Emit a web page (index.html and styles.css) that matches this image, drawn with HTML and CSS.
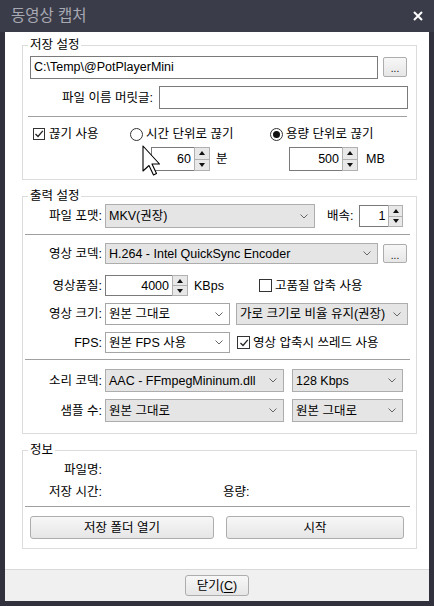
FILE: index.html
```html
<!DOCTYPE html>
<html lang="ko">
<head>
  <meta charset="UTF-8" />
  <title>동영상 캡처</title>
  <link rel="stylesheet" href="styles.css">
</head>
<body>
  <div class="window">
    <div class="titlebar">
      <span class="title">동영상 캡처</span>
      <svg class="close" width="10" height="10" viewBox="0 0 10 10"><path d="M1 1 L9 9 M9 1 L1 9" stroke="#fff" stroke-width="2" fill="none"/></svg>
    </div>

    <div class="client">
      <div class="main">

        <!-- 저장 설정 -->
        <fieldset class="group">
          <legend>저장 설정</legend>
          <div class="row path-row">
            <div class="field path-field">C:\Temp\@PotPlayerMini</div>
            <button class="btn dots">...</button>
          </div>
          <div class="row prefix-row">
            <span class="prefix-label">파일 이름 머릿글:</span>
            <div class="field prefix-field"></div>
          </div>
          <div class="sep sep-save"></div>
          <div class="split">
            <div class="split-col col-a">
              <div class="opt">
                <span class="check"><svg width="10" height="10" viewBox="0 0 10 10"><path d="M1.5 5 L4 7.5 L8.8 1.8" stroke="#222" stroke-width="1.3" fill="none"/></svg></span>
                끊기 사용
              </div>
            </div>
            <div class="split-col col-b">
              <div class="opt"><span class="radio"></span>시간 단위로 끊기</div>
              <div class="spin-line line-min">
                <div class="spin spin-min"><span class="spin-val">60</span><span class="spin-btns"><i class="up"></i><i class="down"></i></span></div>
                <span>분</span>
              </div>
            </div>
            <div class="split-col col-c">
              <div class="opt"><span class="radio on"></span>용량 단위로 끊기</div>
              <div class="spin-line line-mb">
                <div class="spin spin-mb"><span class="spin-val">500</span><span class="spin-btns"><i class="up"></i><i class="down"></i></span></div>
                <span>MB</span>
              </div>
            </div>
          </div>
        </fieldset>

        <!-- 출력 설정 -->
        <fieldset class="group">
          <legend>출력 설정</legend>
          <div class="row frow row-format">
            <span class="flabel">파일 포맷:</span>
            <div class="combo w-format"><span>MKV(권장)</span><svg width="8" height="5" viewBox="0 0 8 5"><path d="M0.5 0.5 L4 4 L7.5 0.5" fill="none" stroke="#666"/></svg></div>
            <span class="speed-label">배속:</span>
            <div class="spin spin-speed"><span class="spin-val">1</span><span class="spin-btns"><i class="up"></i><i class="down"></i></span></div>
          </div>
          <div class="sep sep-out"></div>
          <div class="row frow row-codec">
            <span class="flabel">영상 코덱:</span>
            <div class="combo w-codec"><span>H.264 - Intel QuickSync Encoder</span><svg width="8" height="5" viewBox="0 0 8 5"><path d="M0.5 0.5 L4 4 L7.5 0.5" fill="none" stroke="#666"/></svg></div>
            <button class="btn dots dots-codec">...</button>
          </div>
          <div class="row frow row-quality">
            <span class="flabel">영상품질:</span>
            <div class="quality-box">
              <div class="spin spin-quality"><span class="spin-val">4000</span><span class="spin-btns"><i class="up"></i><i class="down"></i></span></div>
              <span>KBps</span>
            </div>
            <div class="opt-inline"><span class="check"></span>고품질 압축 사용</div>
          </div>
          <div class="row frow row-size">
            <span class="flabel">영상 크기:</span>
            <div class="combo white w-small"><span>원본 그대로</span><svg width="8" height="5" viewBox="0 0 8 5"><path d="M0.5 0.5 L4 4 L7.5 0.5" fill="none" stroke="#666"/></svg></div>
            <div class="combo w-ratio"><span>가로 크기로 비율 유지(권장)</span><svg width="8" height="5" viewBox="0 0 8 5"><path d="M0.5 0.5 L4 4 L7.5 0.5" fill="none" stroke="#666"/></svg></div>
          </div>
          <div class="row frow row-fps">
            <span class="flabel">FPS:</span>
            <div class="combo white w-small"><span>원본 FPS 사용</span><svg width="8" height="5" viewBox="0 0 8 5"><path d="M0.5 0.5 L4 4 L7.5 0.5" fill="none" stroke="#666"/></svg></div>
            <div class="opt-inline thread"><span class="check"><svg width="10" height="10" viewBox="0 0 10 10"><path d="M1.5 5 L4 7.5 L8.8 1.8" stroke="#222" stroke-width="1.3" fill="none"/></svg></span>영상 압축시 쓰레드 사용</div>
          </div>
          <div class="sep sep-out sep-audio"></div>
          <div class="row frow row-audio">
            <span class="flabel">소리 코덱:</span>
            <div class="combo w-audio"><span>AAC - FFmpegMininum.dll</span><svg width="8" height="5" viewBox="0 0 8 5"><path d="M0.5 0.5 L4 4 L7.5 0.5" fill="none" stroke="#666"/></svg></div>
            <div class="combo w-rate"><span>128 Kbps</span><svg width="8" height="5" viewBox="0 0 8 5"><path d="M0.5 0.5 L4 4 L7.5 0.5" fill="none" stroke="#666"/></svg></div>
          </div>
          <div class="row frow row-sample">
            <span class="flabel">샘플 수:</span>
            <div class="combo w-audio"><span>원본 그대로</span><svg width="8" height="5" viewBox="0 0 8 5"><path d="M0.5 0.5 L4 4 L7.5 0.5" fill="none" stroke="#666"/></svg></div>
            <div class="combo w-rate"><span>원본 그대로</span><svg width="8" height="5" viewBox="0 0 8 5"><path d="M0.5 0.5 L4 4 L7.5 0.5" fill="none" stroke="#666"/></svg></div>
          </div>
        </fieldset>

        <!-- 정보 -->
        <fieldset class="group group-info">
          <legend>정보</legend>
          <div class="row info-row info-first">
            <span class="flabel">파일명:</span>
          </div>
          <div class="row info-row info-second">
            <span class="flabel">저장 시간:</span>
            <span class="info-gap"></span>
            <span>용량:</span>
          </div>
          <div class="sep sep-out sep-info"></div>
          <div class="row action-row">
            <button class="btn action open">저장 폴더 열기</button>
            <button class="btn action start">시작</button>
          </div>
        </fieldset>

      </div>

      <div class="footer">
        <button class="btn close-btn">닫기(<u>C</u>)</button>
      </div>
    </div>

    <svg class="cursor" width="19" height="31" viewBox="0 0 19 31"><path d="M1 1 V26 L7 20.5 L11.5 30 L14.5 28.5 L10 19 L17.5 19 Z" fill="#fff" stroke="#000" stroke-width="1.1" stroke-linejoin="round"/></svg>
  </div>
</body>
</html>
```

FILE: styles.css
```css
* {
  box-sizing: border-box;
}

html, body {
  margin: 0;
  padding: 0;
}

body {
  width: 434px;
  height: 606px;
  overflow: hidden;
  font-family: "Liberation Sans", "Noto Sans CJK KR", sans-serif;
  font-size: 12.5px;
  line-height: 16px;
  color: #000;
  background: #30313c;
}

.window {
  position: relative;
  height: 606px;
  display: flex;
  flex-direction: column;
  background: #30313c;
}

.titlebar {
  height: 32px;
  flex: none;
  display: flex;
  align-items: center;
  justify-content: space-between;
  padding: 0 11px;
  background: #3b3c4a;
  color: #a9a9b3;
  font-size: 15.5px;
}

.client {
  flex: 1;
  margin: 0 5px 5px;
  background: #fff;
  display: flex;
  flex-direction: column;
}

.main {
  flex: 1;
  padding: 5px 12px 0 17px;
}

.footer {
  height: 32px;
  flex: none;
  border-top: 1px solid #d9d9d9;
  background: #f0f0f0;
  display: flex;
  justify-content: center;
  padding-top: 5px;
}

/* group boxes */
.group {
  margin: 0;
  border: 1px solid #dcdcdc;
  padding: 0 9px 8px 7px;
  min-width: 0;
}

.group + .group {
  margin-top: 8px;
}

.group legend {
  padding: 0 2px;
  margin-left: -2px;
  line-height: 16px;
}

.row {
  display: flex;
  align-items: center;
}

.sep {
  height: 1px;
  background: #a0a0a0;
}

/* controls */
.field {
  height: 23px;
  border: 1px solid #7a7a7a;
  background: #fff;
  padding: 2px 3px;
  white-space: nowrap;
}

.btn {
  font: inherit;
  color: #000;
  padding: 0;
  border: 1px solid #adadad;
  border-radius: 2px;
  background: linear-gradient(#f7f7f7, #e6e6e6);
  display: flex;
  align-items: center;
  justify-content: center;
}

.dots {
  width: 24px;
  height: 20px;
  flex: none;
  font-size: 10px;
  line-height: 10px;
  padding-top: 4px;
}

.check {
  width: 12px;
  height: 12px;
  flex: none;
  border: 1px solid #333;
  background: #fff;
  display: flex;
  align-items: center;
  justify-content: center;
}

.radio {
  width: 13px;
  height: 13px;
  flex: none;
  border: 1px solid #333;
  border-radius: 50%;
  background: #fff;
  margin-right: 3px;
  display: flex;
  align-items: center;
  justify-content: center;
}

.radio.on::after {
  content: "";
  width: 7px;
  height: 7px;
  border-radius: 50%;
  background: #111;
}

.spin {
  display: flex;
  border: 1px solid #7a7a7a;
  background: #fff;
}

.spin-val {
  flex: 1;
  text-align: right;
  padding-right: 3px;
  align-self: center;
}

.spin-btns {
  width: 16px;
  flex: none;
  display: flex;
  flex-direction: column;
  margin: -1px -1px -1px 0;
}

.spin-btns i {
  flex: 1;
  border: 1px solid #b0b0b0;
  background: #e8e8e8;
  display: flex;
  align-items: center;
  justify-content: center;
}

.spin-btns i + i {
  border-top: none;
}

.spin-btns .up::before {
  content: "";
  border-left: 3px solid transparent;
  border-right: 3px solid transparent;
  border-bottom: 4px solid #111;
}

.spin-btns .down::before {
  content: "";
  border-left: 3px solid transparent;
  border-right: 3px solid transparent;
  border-top: 4px solid #111;
}

.combo {
  display: flex;
  align-items: center;
  justify-content: space-between;
  flex: none;
  border: 1px solid #adadad;
  background: #e5e5e5;
  padding: 0 6px 0 3px;
  white-space: nowrap;
}

.combo.white {
  background: #fff;
  border-color: #a5a5a5;
}

.combo svg {
  flex: none;
}

/* 저장 설정 */
.path-row {
  margin-top: 3px;
  gap: 5px;
  align-items: flex-start;
}

.path-field {
  flex: 1;
}

.path-row .dots {
  margin-top: 1px;
}

.prefix-row {
  margin-top: 7px;
  gap: 6px;
}

.prefix-label {
  width: 123px;
  text-align: right;
}

.prefix-field {
  flex: 1;
  margin-right: -1px;
}

.sep-save {
  margin: 7px 0 0 -2px;
}

.split {
  display: flex;
}

.col-a {
  width: 100px;
}

.col-b {
  width: 140px;
}

.col-c {
  flex: 1;
}

.opt {
  display: flex;
  align-items: center;
  height: 16px;
  margin-top: 9px;
}

.col-a .check {
  margin: 0 4px 0 3px;
}

.spin-line {
  display: flex;
  align-items: center;
  margin-top: 5px;
}

.line-min {
  margin-left: 21px;
  gap: 6px;
}

.line-mb {
  margin-left: 19px;
  gap: 8px;
}

.spin-min {
  width: 59px;
  height: 24px;
}

.spin-mb {
  width: 69px;
  height: 24px;
}

/* 출력 설정 */
.flabel {
  width: 72px;
  flex: none;
  text-align: right;
  margin-right: 3px;
}

.row-format {
  margin-top: 0;
}

.w-format {
  width: 210px;
  height: 24px;
}

.speed-label {
  margin-left: 12px;
}

.spin-speed {
  width: 44px;
  height: 22px;
  margin-left: 6px;
}

.spin-speed .spin-btns {
  width: 15px;
}

.sep-out {
  margin: 6px -3px 0 -5px;
}

.row-codec {
  margin-top: 8px;
}

.w-codec {
  width: 273px;
  height: 21px;
}

.dots-codec {
  height: 19px;
  margin-left: 5px;
}

.row-quality {
  margin-top: 11px;
}

.quality-box {
  width: 154px;
  flex: none;
  display: flex;
  align-items: center;
  gap: 6px;
}

.spin-quality {
  width: 83px;
  height: 21px;
}

.opt-inline {
  display: flex;
  align-items: center;
  gap: 3px;
}

.opt-inline .check {
  width: 13px;
  height: 13px;
}

.row-size {
  margin-top: 7px;
}

.w-small {
  width: 125px;
  height: 22px;
}

.w-ratio {
  width: 172px;
  height: 22px;
  margin-left: 6px;
}

.row-fps {
  margin-top: 7px;
}

.row-fps .w-small {
  height: 21px;
}

.thread {
  margin-left: 7px;
}

.sep-audio {
  margin-top: 6px;
}

.row-audio {
  margin-top: 9px;
}

.row-sample {
  margin-top: 7px;
}

.w-audio {
  width: 179px;
  height: 23px;
}

.w-rate {
  width: 111px;
  height: 23px;
  margin-left: 8px;
}

.group + .group {
  padding-bottom: 11px;
}

/* 정보 */
.group.group-info {
  padding-bottom: 9px;
}

.info-row {
  height: 16px;
}

.info-first {
  margin-top: 4px;
}

.info-second {
  margin-top: 6px;
}

.info-gap {
  width: 118px;
}

.sep-info {
  margin-top: 6px;
}

.action-row {
  margin-top: 9px;
}

.action {
  height: 23px;
  border-radius: 3px;
}

.open {
  width: 184px;
}

.start {
  width: 178px;
  margin-left: 12px;
}

.close-btn {
  width: 64px;
  height: 21px;
  border-radius: 3px;
}

.close-btn u {
  text-underline-offset: 2px;
}

/* mouse pointer over the dialog */
.cursor {
  position: absolute;
  left: 142px;
  top: 145px;
}
```
